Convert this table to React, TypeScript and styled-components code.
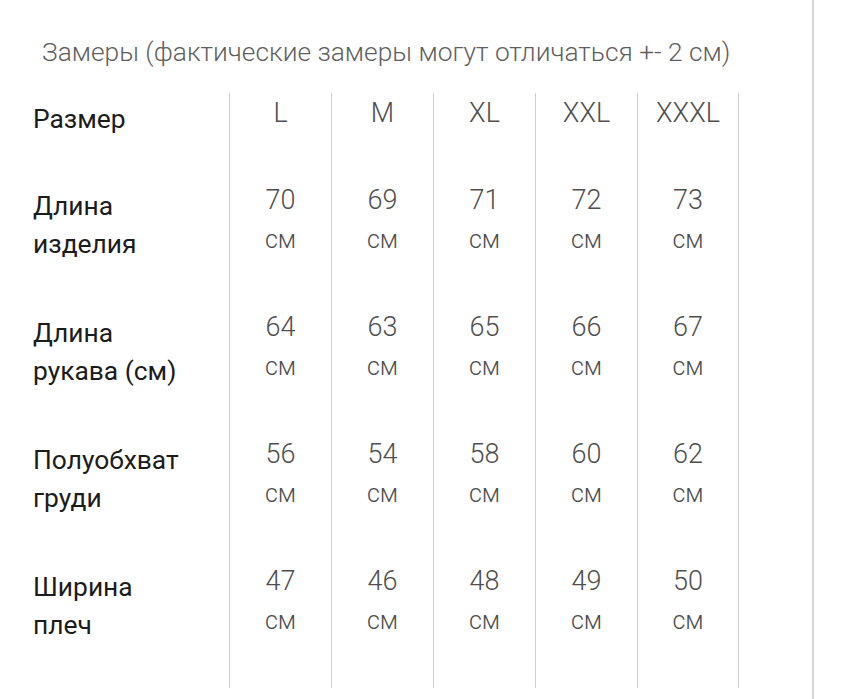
import React from 'react';
import styled, { createGlobalStyle } from 'styled-components';

const GlobalStyle = createGlobalStyle`
  html, body {
    margin: 0;
    padding: 0;
    background: #ffffff;
    font-family: Roboto, "Liberation Sans", Arial, sans-serif;
  }
`;

const Page = styled.div`
  width: 814px;
  height: 699px;
  box-sizing: border-box;
  border-right: 2px solid #d6d6d6;
  padding: 37px 0 0 33px;
  overflow: hidden;
`;

const Title = styled.div`
  margin-left: 9px;
  font-size: 26.3px;
  line-height: 30px;
  font-weight: 300;
  color: #5f5f5f;
  white-space: nowrap;
`;

const Table = styled.div`
  margin-top: 26px;
  display: grid;
  grid-template-columns: 196px repeat(5, 102px);
  width: 708px;
`;

const Label = styled.div`
  padding-top: 7px;
  font-size: 26.4px;
  line-height: 38px;
  font-weight: 400;
  color: #1c1c1c;
`;

const Cell = styled.div<{ $last?: boolean }>`
  border-left: 1px solid #cfcfcf;
  border-right: ${({ $last }) => ($last ? '1px solid #cfcfcf' : 'none')};
  padding-bottom: 47px;
  text-align: center;
  font-size: 27px;
  line-height: 40px;
  font-weight: 300;
  color: #4f4f4f;
`;

const Unit = styled.div`
  font-size: 25px;
`;

const sizes = ['L', 'M', 'XL', 'XXL', 'XXXL'];

const rows = [
  { label: ['Длина', 'изделия'], values: [70, 69, 71, 72, 73] },
  { label: ['Длина', 'рукава (см)'], values: [64, 63, 65, 66, 67] },
  { label: ['Полуобхват', 'груди'], values: [56, 54, 58, 60, 62] },
  { label: ['Ширина', 'плеч'], values: [47, 46, 48, 49, 50] },
];

export default function App() {
  return (
    <>
      <GlobalStyle />
      <Page>
        <Title>Замеры (фактические замеры могут отличаться +- 2 см)</Title>
        <Table>
          <Label>Размер</Label>
          {sizes.map((s, i) => (
            <Cell key={s} $last={i === sizes.length - 1}>
              {s}
            </Cell>
          ))}
          {rows.map((row) => (
            <React.Fragment key={row.label.join(' ')}>
              <Label>
                {row.label[0]}
                <br />
                {row.label[1]}
              </Label>
              {row.values.map((v, i) => (
                <Cell key={i} $last={i === row.values.length - 1}>
                  {v}
                  <Unit>см</Unit>
                </Cell>
              ))}
            </React.Fragment>
          ))}
        </Table>
      </Page>
    </>
  );
}
